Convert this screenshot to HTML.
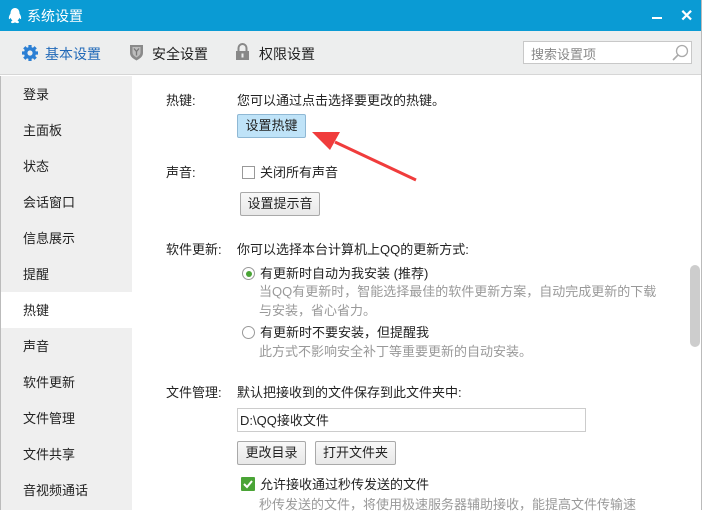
<!DOCTYPE html>
<html><head><meta charset="utf-8"><style>
*{margin:0;padding:0;box-sizing:border-box}
body{width:702px;height:510px;overflow:hidden;position:relative;background:#fff;font-family:"Liberation Sans","Microsoft YaHei","Noto Sans CJK SC",sans-serif;font-size:13px;color:#222}
.a{position:absolute;white-space:nowrap}
.title{left:0;top:0;width:702px;height:31px;background:#0a9bd4}
.tool{left:0;top:31px;width:702px;height:44px;background:#edeeee;border-bottom:1px solid #d6d6d6}
.side{left:1px;top:76px;width:131px;height:434px;background:#efefef}
.btn{position:absolute;border:1px solid #a9a9a9;border-radius:2px;background:linear-gradient(#f8f8f8,#e8e8e8);font-size:13px;text-align:center;line-height:21px;height:24px}
.gray{color:#999}
</style></head><body>
<div class="a title"></div>
<svg class="a" style="left:7px;top:7px" width="16" height="18" viewBox="0 0 16 18"><path d="M8 1C5 1 3.5 3.5 3.5 6.5 2.5 8 1.5 10 2 12c.5.5 1.2-.5 1.7-1.2.3 1.2 1 2.2 1.8 2.8-1.2.5-1.8 1.3-1.3 2 .8.8 2.700.5 3.800-.2 1.100.7 3 1 3.800.2.5-.7-.1-1.500-1.300-2 .8-.6 1.500-1.600 1.800-2.800.5.7 1.200 1.700 1.700 1.200.5-2-.5-4-1.500-5.500C12.500 3.500 11 1 8 1z" fill="#fff"/></svg>
<div class="a" style="left:27px;top:6px;color:#fff;font-size:14px">系统设置</div>
<div class="a" style="left:652px;top:17px;width:10px;height:2px;background:#fff"></div>
<div class="a" style="left:680px;top:6px;color:#fff;font-size:16px;font-weight:bold">✕</div>
<div class="a tool"></div>
<svg class="a" style="left:21px;top:44px" width="18" height="18" viewBox="0 0 18 18"><g fill="#2b7fd4"><circle cx="9" cy="9" r="6"/><g stroke="#2b7fd4" stroke-width="3.2"><path d="M9 1v16M1 9h16M3.3 3.3l11.4 11.4M14.7 3.3L3.3 14.7"/></g></g><circle cx="9" cy="9" r="2.6" fill="#edeeee"/></svg>
<div class="a" style="left:45px;top:44px;font-size:14px;color:#2169b8">基本设置</div>
<svg class="a" style="left:129px;top:44px" width="15" height="17" viewBox="0 0 15 17"><path d="M1 1h13v8c0 4-4 6-6.5 7.5C5 15 1 13 1 9z" fill="#8a8a8a"/><path d="M3.5 3h8v5.5c0 2.5-2.5 4-4 5-1.5-1-4-2.5-4-5z" fill="#bdbdbd"/><path d="M5 4.5l2.5 3 2.5-3M7.5 7.5v4" stroke="#777" stroke-width="1.3" fill="none"/></svg>
<div class="a" style="left:152px;top:44px;font-size:14px">安全设置</div>
<svg class="a" style="left:235px;top:43px" width="15" height="18" viewBox="0 0 15 18"><path d="M3.5 8V5a4 4 0 0 1 8 0v3" stroke="#888" stroke-width="2" fill="none"/><rect x="1" y="8" width="13" height="9" fill="#888"/><rect x="6.5" y="10.5" width="2" height="4" fill="#edeeee"/></svg>
<div class="a" style="left:259px;top:44px;font-size:14px">权限设置</div>
<div class="a" style="left:523px;top:41px;width:169px;height:23px;background:#fff;border:1px solid #c8c8c8"></div>
<div class="a gray" style="left:531px;top:44px;color:#888">搜索设置项</div>
<svg class="a" style="left:671px;top:44px" width="18" height="18" viewBox="0 0 18 18"><circle cx="11" cy="7" r="5.5" stroke="#aaa" stroke-width="1.3" fill="none"/><path d="M7 11l-5 5" stroke="#aaa" stroke-width="1.6"/></svg>
<div class="a" style="left:0;top:76px;width:1px;height:434px;background:#bbb"></div>
<div class="a" style="left:701px;top:0;width:1px;height:510px;background:#bbb"></div>
<div class="a side"></div>
<div class="a" style="left:1px;top:292px;width:131px;height:36px;background:#fff"></div>
<div class="a" style="left:23px;top:77px;line-height:36px">登录<br>主面板<br>状态<br>会话窗口<br>信息展示<br>提醒<br>热键<br>声音<br>软件更新<br>文件管理<br>文件共享<br>音视频通话</div>
<div class="a" style="left:166px;top:90px">热键:</div>
<div class="a" style="left:237px;top:90px">您可以通过点击选择要更改的热键。</div>
<div class="btn" style="left:237px;top:114px;width:69px;background:#bfe3f8;border-color:#8fb8d4">设置热键</div>
<svg class="a" style="left:310px;top:128px" width="110" height="56" viewBox="0 0 110 56"><path d="M106 52L25 14" stroke="#f03c3c" stroke-width="3"/><path d="M2 4L30 4 20 22z" fill="#f03c3c"/></svg>
<div class="a" style="left:166px;top:162px">声音:</div>
<div class="a" style="left:242px;top:166px;width:13px;height:13px;border:1px solid #999;background:#fff"></div>
<div class="a" style="left:260px;top:162px">关闭所有声音</div>
<div class="btn" style="left:240px;top:192px;width:80px">设置提示音</div>
<div class="a" style="left:166px;top:239px">软件更新:</div>
<div class="a" style="left:237px;top:239px">你可以选择本台计算机上QQ的更新方式:</div>
<div class="a" style="left:242px;top:267px;width:13px;height:13px;border:1px solid #999;border-radius:50%;background:#fff"></div>
<div class="a" style="left:245.5px;top:270.5px;width:6px;height:6px;border-radius:50%;background:#4aa436"></div>
<div class="a" style="left:260px;top:263px">有更新时自动为我安装 (推荐)</div>
<div class="a gray" style="left:259px;top:282px;line-height:19px">当QQ有更新时，智能选择最佳的软件更新方案，自动完成更新的下载<br>与安装，省心省力。</div>
<div class="a" style="left:242px;top:326px;width:13px;height:13px;border:1px solid #999;border-radius:50%;background:#fff"></div>
<div class="a" style="left:260px;top:322px">有更新时不要安装，但提醒我</div>
<div class="a gray" style="left:259px;top:341px">此方式不影响安全补丁等重要更新的自动安装。</div>
<div class="a" style="left:166px;top:382px">文件管理:</div>
<div class="a" style="left:237px;top:382px">默认把接收到的文件保存到此文件夹中:</div>
<div class="a" style="left:237px;top:408px;width:349px;height:24px;border:1px solid #ccc;background:#fff"></div>
<div class="a" style="left:240px;top:410px">D:\QQ接收文件</div>
<div class="btn" style="left:237px;top:441px;width:69px">更改目录</div>
<div class="btn" style="left:315px;top:441px;width:81px">打开文件夹</div>
<div class="a" style="left:241px;top:477px;width:14px;height:14px;background:#4aa436;border-radius:1px"></div>
<svg class="a" style="left:241px;top:477px" width="14" height="14"><path d="M3 7l3 3 5-6" stroke="#fff" stroke-width="2" fill="none"/></svg>
<div class="a" style="left:260px;top:474px">允许接收通过秒传发送的文件</div>
<div class="a gray" style="left:259px;top:494px">秒传发送的文件，将使用极速服务器辅助接收，能提高文件传输速</div>
<div class="a" style="left:690px;top:265px;width:10px;height:82px;border-radius:5px;background:#cdcdcd"></div>
</body></html>
